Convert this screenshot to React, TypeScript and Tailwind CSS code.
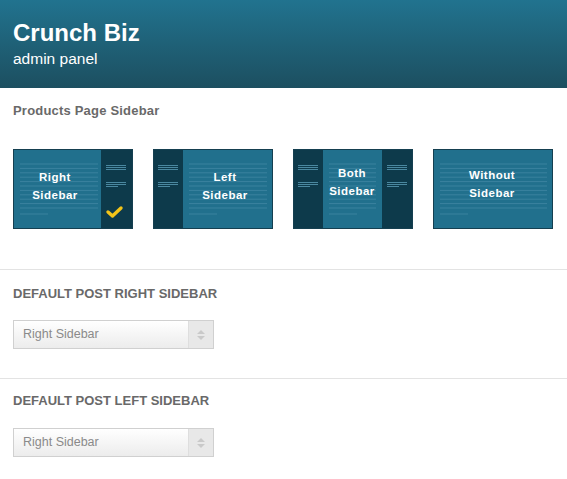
const MAIN = '#21708d';
const DARK = '#0d3a4b';
const LINE = '#4188a3';
const SIDE_LINE = '#4a88a0';

function MainLines({ x1, x2 }: { x1: number; x2: number }) {
  const ys = Array.from({ length: 11 }, (_, i) => 15 + i * 4.4);
  return (
    <g stroke={LINE} strokeWidth={0.8}>
      {ys.map((y) => (
        <line key={y} x1={x1} x2={x2} y1={y} y2={y} />
      ))}
      <line x1={x1} x2={x1 + 28} y1={65} y2={65} />
    </g>
  );
}

function SideLines({ x }: { x: number }) {
  return (
    <g stroke={SIDE_LINE} strokeWidth={1}>
      <line x1={x} x2={x + 20} y1={16.5} y2={16.5} />
      <line x1={x} x2={x + 20} y1={18.5} y2={18.5} />
      <line x1={x} x2={x + 20} y1={20.5} y2={20.5} />
      <line x1={x} x2={x + 20} y1={33.5} y2={33.5} />
      <line x1={x} x2={x + 20} y1={35.5} y2={35.5} />
      <line x1={x} x2={x + 12} y1={37.5} y2={37.5} />
    </g>
  );
}

function Label({ x, y, a, b }: { x: number; y: number; a: string; b: string }) {
  return (
    <g fill="#fff" fontFamily="'Liberation Sans', Arial, sans-serif" fontWeight="bold" fontSize={11.5} letterSpacing={0.5} textAnchor="middle">
      <text x={x} y={y}>{a}</text>
      <text x={x} y={y + 18}>{b}</text>
    </g>
  );
}

function LayoutThumb({ kind }: { kind: 'right' | 'left' | 'both' | 'none' }) {
  return (
    <svg width={120} height={80} viewBox="0 0 120 80" className="block">
      <rect x={0} y={0} width={120} height={80} fill={MAIN} />
      {kind === 'right' && (
        <>
          <MainLines x1={7} x2={85} />
          <rect x={88} y={0} width={32} height={80} fill={DARK} />
          <SideLines x={93} />
          <path d="M95 63 L99.5 67 L108 59" fill="none" stroke="#f3c419" strokeWidth={3.4} strokeLinecap="round" strokeLinejoin="round" />
          <Label x={42} y={32} a="Right" b="Sidebar" />
        </>
      )}
      {kind === 'left' && (
        <>
          <rect x={0} y={0} width={30} height={80} fill={DARK} />
          <SideLines x={5} />
          <MainLines x1={36} x2={114} />
          <Label x={72} y={32} a="Left" b="Sidebar" />
        </>
      )}
      {kind === 'both' && (
        <>
          <rect x={0} y={0} width={30} height={80} fill={DARK} />
          <SideLines x={5} />
          <rect x={89} y={0} width={31} height={80} fill={DARK} />
          <SideLines x={94} />
          <MainLines x1={36} x2={83} />
          <Label x={59} y={28} a="Both" b="Sidebar" />
        </>
      )}
      {kind === 'none' && (
        <>
          <MainLines x1={7} x2={114} />
          <Label x={59} y={30} a="Without" b="Sidebar" />
        </>
      )}
      <rect x={0.5} y={0.5} width={119} height={79} fill="none" stroke="#153f50" />
    </svg>
  );
}

function FakeSelect({ value }: { value: string }) {
  return (
    <div className="flex h-[29px] w-[201px] border border-[#d0d0d0] bg-gradient-to-b from-white to-[#ececec]">
      <div className="flex flex-1 items-center pl-[9px] text-[12.5px] text-[#8a8a8a]">{value}</div>
      <div className="flex w-[25px] flex-col items-center justify-center gap-[2px] border-l border-[#dedede] bg-[#e8e8e8]">
        <svg width={8} height={4} viewBox="0 0 8 4"><path d="M0 4 L4 0 L8 4 Z" fill="#c9c9c9" /></svg>
        <svg width={8} height={4} viewBox="0 0 8 4"><path d="M0 0 L4 4 L8 0 Z" fill="#c9c9c9" /></svg>
      </div>
    </div>
  );
}

export default function App() {
  return (
    <div className="min-h-[479px] w-[567px] bg-white font-['Liberation_Sans',Arial,sans-serif]">
      <div className="h-[88px] bg-gradient-to-b from-[#21738f] to-[#1c4f60] px-[13px] pt-[19px] text-white">
        <div className="text-[24px] font-bold leading-[28px]">Crunch Biz</div>
        <div className="mt-[3px] text-[15.5px] leading-[18px]">admin panel</div>
      </div>

      {/* Products page */}
      <div className="px-[13px] pb-[40px] pt-[15px]">
        <h3 className="text-[13px] font-bold leading-[16px] tracking-[0.2px] text-[#696969]">Products Page Sidebar</h3>
        <div className="mt-[30px] flex gap-[20px]">
          <LayoutThumb kind="right" />
          <LayoutThumb kind="left" />
          <LayoutThumb kind="both" />
          <LayoutThumb kind="none" />
        </div>
      </div>

      <div className="border-t border-[#e3e3e3] px-[13px] pb-[29px] pt-[16px]">
        <h3 className="text-[13px] font-bold leading-[16px] text-[#696969]">DEFAULT POST RIGHT SIDEBAR</h3>
        <div className="mt-[18px]">
          <FakeSelect value="Right Sidebar" />
        </div>
      </div>

      <div className="border-t border-[#e3e3e3] px-[13px] pb-[20px] pt-[14px]">
        <h3 className="text-[13px] font-bold leading-[16px] text-[#696969]">DEFAULT POST LEFT SIDEBAR</h3>
        <div className="mt-[19px]">
          <FakeSelect value="Right Sidebar" />
        </div>
      </div>
    </div>
  );
}
